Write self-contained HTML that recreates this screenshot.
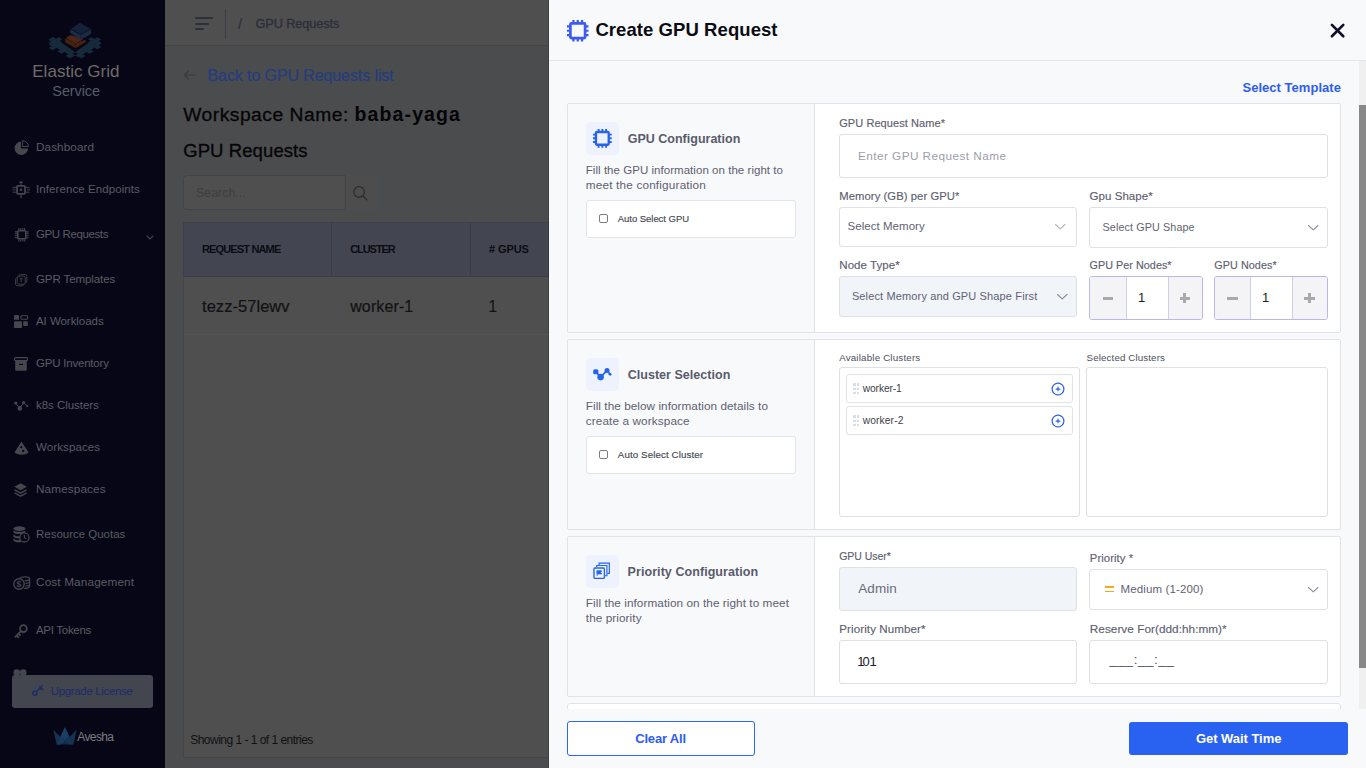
<!DOCTYPE html>
<html lang="en"><head><meta charset="utf-8"><title>Create GPU Request</title>
<style>
html,body{margin:0;padding:0}
body{width:1366px;height:768px;overflow:hidden;position:relative;background:#4e4e50;font-family:"Liberation Sans",sans-serif;}
.t{position:absolute;white-space:nowrap;display:block}
.b{position:absolute;box-sizing:border-box}
svg{position:absolute;overflow:visible}
#root{position:absolute;left:0;top:0;width:1366px;height:768px}
</style></head><body><div id="root">
<div class="b" style="left:165px;top:0px;width:384px;height:768px;background:#4b4c4e"></div>
<div class="b" style="left:165px;top:0px;width:384px;height:46px;background:#4f4f4f;border-bottom:1px solid #444548"></div>
<div class="b" style="left:195px;top:17.2px;width:18px;height:2.2px;background:#2d2f3c;border-radius:1.1px"></div>
<div class="b" style="left:195px;top:22.7px;width:14px;height:2.2px;background:#2d2f3c;border-radius:1.1px"></div>
<div class="b" style="left:195px;top:27.8px;width:9px;height:2.2px;background:#2d2f3c;border-radius:1.1px"></div>
<div class="b" style="left:225px;top:9px;width:1px;height:30px;background:#3b3c49"></div>
<span class="t" style="left:238.00px;top:15px;font-size:15px;line-height:17px;color:#2a2c39;letter-spacing:0.000px;">/</span>
<span class="t" style="left:255.50px;top:16px;font-size:12.75px;line-height:15px;color:#2b2d3a;letter-spacing:-0.103px;-webkit-text-stroke:0.3px #2b2d3a;">GPU Requests</span>
<svg style="left:183px;top:69px" width="13" height="12" viewBox="0 0 13 12"><path d="M12 6H1.5M5.5 2L1.5 6l4 4" fill="none" stroke="#3a3a3c" stroke-width="1.2" stroke-linecap="round" stroke-linejoin="round"/></svg>
<span class="t" style="left:207.50px;top:67px;font-size:16px;line-height:17px;color:#243c80;letter-spacing:-0.097px;-webkit-text-stroke:0.15px #243c80;">Back to GPU Requests list</span>
<span class="t" style="left:183.20px;top:104px;font-size:19.25px;line-height:21px;color:#050507;letter-spacing:0.505px;-webkit-text-stroke:0.3px #050507;">Workspace Name: </span>
<span class="t" style="left:354.60px;top:103px;font-size:19.5px;line-height:22px;color:#050507;font-weight:700;letter-spacing:1.105px;">baba-yaga</span>
<span class="t" style="left:183.20px;top:140px;font-size:18.5px;line-height:21px;color:#050507;letter-spacing:0.093px;-webkit-text-stroke:0.3px #050507;">GPU Requests</span>
<div class="b" style="left:183px;top:175px;width:163px;height:35px;background:#4f4f4f;border:1px solid #444446;border-radius:4px 0 0 4px"></div>
<div class="b" style="left:346px;top:175px;width:32px;height:35px;background:#4d4d4e;border-radius:0 4px 4px 0"></div>
<span class="t" style="left:195.90px;top:186px;font-size:12.5px;line-height:14px;color:#3e3e41;letter-spacing:-0.025px;">Search...</span>
<svg style="left:352px;top:185px" width="17" height="17" viewBox="0 0 17 17"><circle cx="7.1" cy="7" r="5.3" fill="none" stroke="#2c2c2f" stroke-width="1.2"/><path d="M11 11L14.9 14.8" stroke="#2c2c2f" stroke-width="1.2" stroke-linecap="round"/></svg>
<div class="b" style="left:183px;top:222px;width:366px;height:536px;background:#4f4f4f;border-left:1px solid #454548;border-bottom:1px solid #454548"></div>
<div class="b" style="left:183px;top:222px;width:366px;height:55px;background:#434650;border-bottom:1px solid #3a3c49;border-top:1px solid #3d3f4b;border-left:1px solid #3d3f4b"></div>
<div class="b" style="left:331px;top:222px;width:1px;height:55px;background:#3a3c49"></div>
<div class="b" style="left:470px;top:222px;width:1px;height:55px;background:#3a3c49"></div>
<span class="t" style="left:202.00px;top:243px;font-size:11px;line-height:12px;color:#0c0c14;font-weight:700;letter-spacing:-0.852px;">REQUEST NAME</span>
<span class="t" style="left:350.20px;top:243px;font-size:11px;line-height:12px;color:#0c0c14;font-weight:700;letter-spacing:-1.064px;">CLUSTER</span>
<span class="t" style="left:489.00px;top:243px;font-size:11px;line-height:12px;color:#0c0c14;font-weight:700;letter-spacing:-0.092px;"># GPUS</span>
<div class="b" style="left:184px;top:334px;width:365px;height:1px;background:#555558"></div>
<span class="t" style="left:202.00px;top:297px;font-size:16.5px;line-height:18px;color:#121214;letter-spacing:0.044px;-webkit-text-stroke:0.2px #121214;">tezz-57lewv</span>
<span class="t" style="left:350.20px;top:298px;font-size:16px;line-height:17px;color:#121214;letter-spacing:0.121px;-webkit-text-stroke:0.2px #121214;">worker-1</span>
<span class="t" style="left:488.30px;top:298px;font-size:16px;line-height:17px;color:#121214;letter-spacing:0.000px;">1</span>
<span class="t" style="left:190.20px;top:733px;font-size:12px;line-height:14px;color:#111113;letter-spacing:-0.518px;">Showing 1 - 1 of 1 entries</span>
<div class="b" style="left:0px;top:0px;width:165px;height:768px;background:#060616"></div>
<span class="t" style="left:32.20px;top:62px;font-size:17px;line-height:19px;color:#6f6c68;letter-spacing:0.041px;">Elastic Grid</span>
<span class="t" style="left:52.30px;top:83px;font-size:14.5px;line-height:16px;color:#555c68;letter-spacing:-0.093px;">Service</span>
<span class="t" style="left:36.00px;top:140px;font-size:11.75px;line-height:13px;color:#5b5c64;letter-spacing:0.068px;">Dashboard</span>
<span class="t" style="left:36.00px;top:183px;font-size:11.5px;line-height:12px;color:#5b5c64;letter-spacing:0.085px;">Inference Endpoints</span>
<span class="t" style="left:36.00px;top:228px;font-size:11.5px;line-height:12px;color:#5b5c64;letter-spacing:-0.392px;">GPU Requests</span>
<span class="t" style="left:36.00px;top:273px;font-size:11.5px;line-height:12px;color:#5b5c64;letter-spacing:-0.086px;">GPR Templates</span>
<span class="t" style="left:36.00px;top:315px;font-size:11.5px;line-height:12px;color:#5b5c64;letter-spacing:-0.048px;">AI Workloads</span>
<span class="t" style="left:36.00px;top:357px;font-size:11.5px;line-height:12px;color:#5b5c64;letter-spacing:-0.209px;">GPU Inventory</span>
<span class="t" style="left:36.00px;top:399px;font-size:11.5px;line-height:12px;color:#5b5c64;letter-spacing:-0.039px;">k8s Clusters</span>
<span class="t" style="left:36.00px;top:441px;font-size:11.5px;line-height:12px;color:#5b5c64;letter-spacing:0.104px;">Workspaces</span>
<span class="t" style="left:36.00px;top:482px;font-size:11.75px;line-height:13px;color:#5b5c64;letter-spacing:0.113px;">Namespaces</span>
<span class="t" style="left:36.00px;top:528px;font-size:11.5px;line-height:12px;color:#5b5c64;letter-spacing:-0.013px;">Resource Quotas</span>
<span class="t" style="left:36.00px;top:575px;font-size:11.75px;line-height:13px;color:#5b5c64;letter-spacing:0.146px;">Cost Management</span>
<span class="t" style="left:36.00px;top:624px;font-size:11.5px;line-height:12px;color:#5b5c64;letter-spacing:-0.296px;">API Tokens</span>
<svg style="left:146px;top:234.5px" width="8" height="5" viewBox="0 0 8 5"><path d="M.7.7L4 4 7.3.7" fill="none" stroke="#44464f" stroke-width="1.1"/></svg>
<svg style="left:48px;top:22px" width="56" height="38" viewBox="0 0 56 38"><path transform="translate(0,3.2)" d="M0.5 17.5L5 15l3 1.8 3-1.6 3.4 2-3 1.7L27.2 30.3 43 19l-3-1.8 3.4-2 3 1.7 3-1.7 4 2.4-3.6 2 3.6 2.2-4 2.3-3.2-1.9-3.6 2.1 3.2 1.9-4.2 2.4-3.2-1.9-3.8 2.2 3 1.8-4.2 2.4-6.2-2.6-5.4 2.6-4.2-2.4 3-1.8-3.8-2.2-3.2 1.9-4.2-2.4 3.2-1.9-3.6-2.1L4.8 25 .6 22.6l3.6-2.1z" fill="#172a3c"/><path d="M0.5 17.5L5 15l3 1.8 3-1.6 3.4 2-3 1.7L27.2 30.3 43 19l-3-1.8 3.4-2 3 1.7 3-1.7 4 2.4-3.6 2 3.6 2.2-4 2.3-3.2-1.9-3.6 2.1 3.2 1.9-4.2 2.4-3.2-1.9-3.8 2.2 3 1.8-4.2 2.4-6.2-2.6-5.4 2.6-4.2-2.4 3-1.8-3.8-2.2-3.2 1.9-4.2-2.4 3.2-1.9-3.6-2.1L4.8 25 .6 22.6l3.6-2.1z" fill="#172a3c"/><path d="M17.7 16.1l4.9-3.2 12.6 4.5L27.5 21.6z" fill="#4d2618"/><path d="M17.1 16.3l10.4 5.3v4.6L17.1 20.3z" fill="#45210f"/><path d="M27.5 21.6l10.1-4.2v2.9L27.5 26.2z" fill="#47220f"/><path d="M32 .8l10.5 5.9-9.8 5.8-9.8-5.8z" fill="#14213a"/><path d="M22.3 7.2l10.4 5.9v4.6L22.3 10.9z" fill="#1c2e43"/><path d="M32.7 13.1l10.4-6.2v5L32.7 17.7z" fill="#1a2a40"/></svg>
<svg style="left:13.5px;top:140px" width="15" height="15" viewBox="0 0 15 15"><path d="M7 1.6A6.7 6.7 0 1 0 14 8.4H7z" fill="#45464e"/><path d="M8.6.6a6 6 0 0 1 5.8 5.9H8.6z" fill="none" stroke="#45464e" stroke-width="1"/></svg>
<svg style="left:12px;top:181px" width="18" height="17.5" viewBox="0 0 18 17.5"><rect x="5" y="4.8" width="8" height="8" rx="1" fill="none" stroke="#45464e" stroke-width="1.8"/><circle cx="9" cy="8.8" r="1.3" fill="#45464e"/><path d="M9 1.2v3M9 13v2.4M.5 6.4h3.6M.5 8.8h3M.5 11.2h3.6M14 6.4h3.6M15 8.8h3M14 11.2h3.6" stroke="#45464e" stroke-width="1"/><path d="M7.3.5h3.4v1.4H7.3zM7.6 15.6h2.8L9 17.3z" fill="#45464e"/></svg>
<svg style="left:14.5px;top:228.2px" width="13.6" height="13.6" viewBox="0 0 13.6 13.6"><rect x="2.8" y="2.8" width="8" height="8" rx=".8" fill="none" stroke="#45464e" stroke-width="1.6"/><path d="M3.9 0v2.2M3.9 11.4v2.2M0 3.9h2.2M11.4 3.9h2.2M5.8 0v2.2M5.8 11.4v2.2M0 5.8h2.2M11.4 5.8h2.2M7.8 0v2.2M7.8 11.4v2.2M0 7.8h2.2M11.4 7.8h2.2M9.7 0v2.2M9.7 11.4v2.2M0 9.7h2.2M11.4 9.7h2.2" stroke="#45464e" stroke-width="1.1"/></svg>
<svg style="left:15px;top:273.5px" width="12.5" height="12.5" viewBox="0 0 12.5 12.5"><rect x="3.6" y=".6" width="8.2" height="8.2" rx="1.8" fill="none" stroke="#3d3e46" stroke-width="1"/><rect x=".6" y="3.6" width="8.2" height="8.2" rx="1.8" fill="none" stroke="#3d3e46" stroke-width="1"/><rect x="2.2" y="2.2" width="8" height="8" rx="1.6" fill="#060616" stroke="#3d3e46" stroke-width="1"/><path d="M4.5 4.7h3.4M6.2 4.7v3.4" stroke="#3d3e46" stroke-width="1"/></svg>
<svg style="left:14px;top:315px" width="14.2" height="13.2" viewBox="0 0 14.2 13.2"><rect x="0" y="0" width="5" height="4.8" rx=".7" fill="#45464e"/><rect x="7" y=".8" width="6.6" height="3.4" rx=".8" fill="none" stroke="#45464e" stroke-width="1.1"/><rect x="0" y="6.2" width="8" height="6.8" rx=".8" fill="#45464e"/><rect x="9.2" y="6.2" width="4.6" height="4.8" rx=".7" fill="#45464e"/></svg>
<svg style="left:14px;top:357.2px" width="14" height="14" viewBox="0 0 14 14"><rect x=".6" y=".6" width="12.8" height="3" rx=".7" fill="none" stroke="#45464e" stroke-width="1.1"/><path d="M1.2 4h11.6v8.8a1 1 0 0 1-1 1H2.2a1 1 0 0 1-1-1z" fill="#45464e"/><path d="M5 7.4h4" stroke="#060616" stroke-width="1.2"/></svg>
<svg style="left:14px;top:401px" width="14.5" height="10.5" viewBox="0 0 14.5 10.5"><path d="M1.8 2.2L5.8 7.4 9.6 1.6 13.3 5" fill="none" stroke="#45464e" stroke-width="1"/><rect x=".4" y=".8" width="2.7" height="2.7" rx=".5" fill="#45464e"/><circle cx="5.8" cy="7.4" r="2.3" fill="#45464e"/><circle cx="9.7" cy="1.7" r="1.6" fill="#45464e"/><circle cx="13.3" cy="5" r="1.1" fill="#45464e"/></svg>
<svg style="left:13.5px;top:440.5px" width="15" height="14.5" viewBox="0 0 15 14.5"><path d="M7.5.4L.4 11.6c4.2 3 10 3 14.2 0z" fill="#45464e"/><circle cx="7.3" cy="6.2" r="1.1" fill="#060616"/><circle cx="9.2" cy="9.9" r="1.2" fill="#060616"/></svg>
<svg style="left:14.3px;top:483px" width="13.2" height="13.6" viewBox="0 0 13.2 13.6"><path d="M6.6.3L12.9 3.8 6.6 7.3.3 3.8z" fill="#45464e"/><path d="M.6 6.9l6 3.3 6-3.3M.6 9.9l6 3.3 6-3.3" fill="none" stroke="#45464e" stroke-width="1.3"/></svg>
<svg style="left:12.8px;top:526.4px" width="17" height="17" viewBox="0 0 17 17"><ellipse cx="6.4" cy="2.6" rx="6" ry="2.4" fill="#45464e"/><path d="M.4 4.2c1.6 2.2 10.400 2.200 12 0v2.200c-1.600 2.200-10.400 2.200-12 0zM.4 8.200c1.600 2.200 6 2.400 7.400 1.700v2.400c-2 .5-5.800.2-7.400-1.700zM.4 12.200c1.600 1.900 5 2.300 7 1.900l1 2c-2.600.6-6.600-.1-8-1.700z" fill="#45464e"/><circle cx="11.400" cy="11.400" r="4.600" fill="#060616" stroke="#45464e" stroke-width="1.300"/><path d="M11.400 8.800v2.800l1.800 1" fill="none" stroke="#45464e" stroke-width="1.100"/></svg>
<svg style="left:12.8px;top:576px" width="17" height="14" viewBox="0 0 17 14"><path d="M7 2.200C8 .6 16.400.4 16.600 2.600v7.600c-.4 1.800-3.600 2.400-5.600 2.200" fill="none" stroke="#45464e" stroke-width="1.300"/><path d="M11.600 4.800c2 0 4.400-.4 5-1.400M12.400 7.400c1.800 0 3.600-.4 4.200-1.200M12.200 10c1.800 0 3.800-.4 4.400-1.300" fill="none" stroke="#45464e" stroke-width="1.100"/><circle cx="6" cy="8" r="5.200" fill="#060616" stroke="#45464e" stroke-width="1.400"/></svg>
<span class="t" style="left:16.40px;top:579px;font-size:8.5px;line-height:10px;color:#45464e;font-weight:700;letter-spacing:0.000px;">$</span>
<svg style="left:14.4px;top:623.6px" width="14" height="15" viewBox="0 0 14 15"><circle cx="9.400" cy="4.600" r="3.400" fill="none" stroke="#45464e" stroke-width="1.800"/><path d="M7 7.200L1.400 12.800M2.600 11.600l1.800 1.800M4.600 9.600l1.600 1.600" fill="none" stroke="#45464e" stroke-width="1.700" stroke-linecap="round"/></svg>
<svg style="left:12.8px;top:669.4px" width="14" height="12" viewBox="0 0 14 12"><circle cx="3.800" cy="3.600" r="3.300" fill="#45464e"/><circle cx="10.200" cy="3.600" r="3.300" fill="#45464e"/><path d="M0 12c0-3 1.600-4.600 3.800-4.600S7.600 9 7.600 12zM6.600 12c0-3 1.600-4.600 3.800-4.600S14 9 14 12z" fill="#45464e"/></svg>
<span class="t" style="left:36.00px;top:673px;font-size:11.5px;line-height:12px;color:#5b5c64;letter-spacing:-0.406px;">Users</span>
<div class="b" style="left:12px;top:675px;width:141px;height:33px;background:#43464f;border-radius:3px"></div>
<span class="t" style="left:50.80px;top:685px;font-size:11.5px;line-height:12px;color:#1d2b68;letter-spacing:-0.356px;">Upgrade License</span>
<span class="t" style="left:77.30px;top:730px;font-size:12px;line-height:14px;color:#7c7c80;letter-spacing:-0.618px;">Avesha</span>
<svg style="left:52.5px;top:726.5px" width="24" height="18" viewBox="0 0 24 18"><path d="M.3 2.8L8 10.5 3.600 17.500z" fill="#17324f"/><path d="M23.700 2.800L16 10.500l4.400 7z" fill="#17324f"/><path d="M11.900.2L3.600 17.500h16.800z" fill="#142c4a"/><path d="M11.900.2L7.600 9.300l4.300 4.200 4.300-4.200z" fill="#1a3f66"/><path d="M7.600 9.300L3.600 17.500h4.200l4.100-4z" fill="#183a5e"/><path d="M16.200 9.300l4.200 8.200h-4.200l-4.300-4z" fill="#153354"/></svg>
<svg style="left:32px;top:685.4px" width="12.5" height="11.200" viewBox="0 0 12.5 11.200"><circle cx="2.900" cy="8.200" r="2.100" fill="none" stroke="#1d2b68" stroke-width="1.400"/><path d="M4.400 6.700L9.600 1.600M7.600 1.400l3.400 3.200M9.900.8L8.400 4.600" fill="none" stroke="#1d2b68" stroke-width="1.400" stroke-linecap="round"/></svg>
<div class="b" style="left:548px;top:0px;width:1px;height:768px;background:rgba(0,0,0,.18)"></div>
<div class="b" style="left:549px;top:0px;width:817px;height:768px;background:#f8f9fb"></div>
<div class="b" style="left:549px;top:60px;width:817px;height:1px;background:#e4e5e9"></div>
<svg style="left:566.7px;top:19.7px" width="21.5" height="21.5" viewBox="0 0 24 24"><rect x="3.8" y="3.8" width="16.4" height="16.4" rx="1.2" fill="none" stroke="#3d5af1" stroke-width="3"/><path d="M7.2 0v2.8M7.2 21.2v2.8M0 7.2h2.8M21.2 7.2h2.8M12 0v2.8M12 21.2v2.8M0 12h2.8M21.2 12h2.8M16.8 0v2.8M16.8 21.2v2.8M0 16.8h2.8M21.2 16.8h2.8" stroke="#3d5af1" stroke-width="2.5"/></svg>
<span class="t" style="left:595.40px;top:19px;font-size:18.5px;line-height:21px;color:#0b0b12;font-weight:700;letter-spacing:0.070px;">Create GPU Request</span>
<svg style="left:1329.8px;top:22.6px" width="15.2" height="15.2" viewBox="0 0 15.2 15.2"><path d="M1.900 1.900l11.400 11.400M13.300 1.900L1.900 13.300" stroke="#0d0f2b" stroke-width="2.600" stroke-linecap="round"/></svg>
<span class="t" style="left:1242.50px;top:80px;font-size:13px;line-height:15px;color:#2d5df0;font-weight:700;letter-spacing:0.025px;">Select Template</span>
<div class="b" style="left:1359px;top:61px;width:7px;height:648px;background:#f0f0f1"></div>
<div class="b" style="left:1359px;top:105px;width:7px;height:563px;background:#888889"></div>
<div class="b" style="left:567px;top:103px;width:774px;height:230px;background:#fff;border:1px solid #e2e3e7;border-radius:2px"></div>
<div class="b" style="left:568px;top:104px;width:246px;height:228px;background:#f8f9fb"></div>
<div class="b" style="left:814px;top:104px;width:1px;height:228px;background:#e2e3e7"></div>
<div class="b" style="left:586px;top:122px;width:33px;height:33px;background:#edf2fe;border-radius:5px"></div>
<svg style="left:592.7px;top:129.3px" width="18.7" height="18.7" viewBox="0 0 24 24"><rect x="3.8" y="3.8" width="16.4" height="16.4" rx="1.2" fill="none" stroke="#2563eb" stroke-width="3"/><path d="M7.2 0v2.8M7.2 21.2v2.8M0 7.2h2.8M21.2 7.2h2.8M12 0v2.8M12 21.2v2.8M0 12h2.8M21.2 12h2.8M16.8 0v2.8M16.8 21.2v2.8M0 16.8h2.8M21.2 16.8h2.8" stroke="#2563eb" stroke-width="2.5"/></svg>
<span class="t" style="left:627.70px;top:132px;font-size:12.5px;line-height:14px;color:#595b6b;font-weight:700;letter-spacing:0.006px;">GPU Configuration</span>
<span class="t" style="left:585.80px;top:164px;font-size:11.5px;line-height:12px;color:#5d6070;letter-spacing:0.040px;">Fill the GPU information on the right to</span>
<span class="t" style="left:585.80px;top:178px;font-size:11.75px;line-height:13px;color:#5d6070;letter-spacing:0.179px;">meet the configuration</span>
<div class="b" style="left:586px;top:200px;width:210px;height:38px;background:#fff;border:1px solid #e3e4e8;border-radius:3px"></div>
<div class="b" style="left:599px;top:214px;width:9px;height:9px;background:#fff;border:1px solid #7d7d80;border-radius:2px"></div>
<span class="t" style="left:617.80px;top:213px;font-size:9.5px;line-height:11px;color:#474852;letter-spacing:-0.041px;-webkit-text-stroke:0.15px #474852;">Auto Select GPU</span>
<span class="t" style="left:839.20px;top:117px;font-size:11px;line-height:12px;color:#5d6070;letter-spacing:0.074px;-webkit-text-stroke:0.15px #5d6070;">GPU Request Name*</span>
<div class="b" style="left:839px;top:134px;width:489px;height:44px;background:#fff;border:1px solid #dfe0e4;border-radius:3px"></div>
<span class="t" style="left:858.00px;top:149px;font-size:11.75px;line-height:13px;color:#9d9eab;letter-spacing:0.452px;">Enter GPU Request Name</span>
<span class="t" style="left:839.30px;top:190px;font-size:11.25px;line-height:12px;color:#5d6070;letter-spacing:0.072px;-webkit-text-stroke:0.15px #5d6070;">Memory (GB) per GPU*</span>
<div class="b" style="left:839px;top:207px;width:238px;height:40px;background:#fff;border:1px solid #dfe0e4;border-radius:3px"></div>
<span class="t" style="left:847.50px;top:220px;font-size:11.5px;line-height:12px;color:#5f6272;letter-spacing:0.047px;">Select Memory</span>
<svg style="left:1054.55px;top:223.9px" width="10.5" height="5.4" viewBox="0 0 10.5 5.4"><path d="M.5 .5L5.25 4.9L10 .5" fill="none" stroke="#b4b4be" stroke-width="1.1" stroke-linecap="round" stroke-linejoin="round"/></svg>
<span class="t" style="left:1089.60px;top:190px;font-size:11.5px;line-height:12px;color:#5d6070;letter-spacing:0.044px;-webkit-text-stroke:0.15px #5d6070;">Gpu Shape*</span>
<div class="b" style="left:1089px;top:207px;width:239px;height:41px;background:#fff;border:1px solid #dfe0e4;border-radius:3px"></div>
<span class="t" style="left:1102.50px;top:221px;font-size:10.75px;line-height:12px;color:#5f6272;letter-spacing:0.123px;">Select GPU Shape</span>
<svg style="left:1308.05px;top:224.8px" width="10.5" height="5.4" viewBox="0 0 10.5 5.4"><path d="M.5 .5L5.25 4.9L10 .5" fill="none" stroke="#8f8f9b" stroke-width="1.1" stroke-linecap="round" stroke-linejoin="round"/></svg>
<span class="t" style="left:839.30px;top:259px;font-size:11.5px;line-height:12px;color:#5d6070;letter-spacing:0.052px;-webkit-text-stroke:0.15px #5d6070;">Node Type*</span>
<div class="b" style="left:839px;top:276px;width:238px;height:41px;background:#f1f4f9;border:1px solid #dfe0e4;border-radius:3px"></div>
<span class="t" style="left:851.90px;top:290px;font-size:11px;line-height:12px;color:#5f6272;letter-spacing:0.137px;">Select Memory and GPU Shape First</span>
<svg style="left:1057.15px;top:294.1px" width="10.5" height="5.4" viewBox="0 0 10.5 5.4"><path d="M.5 .5L5.25 4.9L10 .5" fill="none" stroke="#8d8d99" stroke-width="1.1" stroke-linecap="round" stroke-linejoin="round"/></svg>
<span class="t" style="left:1089.60px;top:259px;font-size:10.75px;line-height:12px;color:#5d6070;letter-spacing:0.053px;-webkit-text-stroke:0.15px #5d6070;">GPU Per Nodes*</span>
<div class="b" style="left:1089px;top:276px;width:114px;height:44px;background:#fff;border:1px solid #b9b8e6;border-radius:3px"></div>
<div class="b" style="left:1090px;top:277px;width:36.5px;height:42px;background:#f4f4f6;border-right:1px solid #cfcfe6;border-radius:2px 0 0 2px"></div>
<div class="b" style="left:1167.5px;top:277px;width:34.5px;height:42px;background:#f4f4f6;border-left:1px solid #cfcfe6;border-radius:0 2px 2px 0"></div>
<div class="b" style="left:1102.75px;top:296.6px;width:10.6px;height:3px;background:#a9a9ad"></div>
<div class="b" style="left:1179.65px;top:296.6px;width:10.6px;height:3px;background:#a9a9ad"></div>
<div class="b" style="left:1183.45px;top:292.8px;width:3px;height:10.6px;background:#a9a9ad"></div>
<span class="t" style="left:1138.00px;top:290px;font-size:13px;line-height:15px;color:#1d1d26;letter-spacing:0.000px;">1</span>
<span class="t" style="left:1214.30px;top:259px;font-size:10.75px;line-height:12px;color:#5d6070;letter-spacing:0.086px;-webkit-text-stroke:0.15px #5d6070;">GPU Nodes*</span>
<div class="b" style="left:1214px;top:276px;width:114px;height:44px;background:#fff;border:1px solid #b9b8e6;border-radius:3px"></div>
<div class="b" style="left:1215px;top:277px;width:35.5px;height:42px;background:#f4f4f6;border-right:1px solid #cfcfe6;border-radius:2px 0 0 2px"></div>
<div class="b" style="left:1291.5px;top:277px;width:35.5px;height:42px;background:#f4f4f6;border-left:1px solid #cfcfe6;border-radius:0 2px 2px 0"></div>
<div class="b" style="left:1227.25px;top:296.6px;width:10.6px;height:3px;background:#a9a9ad"></div>
<div class="b" style="left:1304.15px;top:296.6px;width:10.6px;height:3px;background:#a9a9ad"></div>
<div class="b" style="left:1307.95px;top:292.8px;width:3px;height:10.6px;background:#a9a9ad"></div>
<span class="t" style="left:1262.00px;top:290px;font-size:13px;line-height:15px;color:#1d1d26;letter-spacing:0.000px;">1</span>
<div class="b" style="left:567px;top:339px;width:774px;height:191px;background:#fff;border:1px solid #e2e3e7;border-radius:2px"></div>
<div class="b" style="left:568px;top:340px;width:246px;height:189px;background:#f8f9fb"></div>
<div class="b" style="left:814px;top:340px;width:1px;height:189px;background:#e2e3e7"></div>
<div class="b" style="left:586px;top:358px;width:33px;height:33px;background:#edf2fe;border-radius:5px"></div>
<svg style="left:593px;top:367.3px" width="19" height="14" viewBox="0 0 19 14"><path d="M2.8 4.800L7.600 10.100 14 3.600 17.100 7.300" fill="none" stroke="#2563eb" stroke-width="1.700"/><rect x=".2" y="2.200" width="5.200" height="5.100" rx="1.600" fill="#2563eb"/><circle cx="7.600" cy="10.100" r="3.300" fill="#2563eb"/><circle cx="14" cy="3.600" r="2.500" fill="#2563eb"/><circle cx="17.100" cy="7.300" r="1.400" fill="#2563eb"/></svg>
<span class="t" style="left:627.70px;top:368px;font-size:12.5px;line-height:14px;color:#595b6b;font-weight:700;letter-spacing:0.029px;">Cluster Selection</span>
<span class="t" style="left:585.80px;top:399px;font-size:11.75px;line-height:13px;color:#5d6070;letter-spacing:0.052px;">Fill the below information details to</span>
<span class="t" style="left:585.80px;top:414px;font-size:11.75px;line-height:13px;color:#5d6070;letter-spacing:0.112px;">create a workspace</span>
<div class="b" style="left:586px;top:436px;width:210px;height:38px;background:#fff;border:1px solid #e3e4e8;border-radius:3px"></div>
<div class="b" style="left:599px;top:450px;width:9px;height:9px;background:#fff;border:1px solid #7d7d80;border-radius:2px"></div>
<span class="t" style="left:617.80px;top:449px;font-size:9.75px;line-height:11px;color:#474852;letter-spacing:0.102px;-webkit-text-stroke:0.15px #474852;">Auto Select Cluster</span>
<span class="t" style="left:839.20px;top:352px;font-size:9.75px;line-height:11px;color:#4d4f5c;letter-spacing:0.186px;">Available Clusters</span>
<div class="b" style="left:839px;top:367px;width:241px;height:150px;background:#fff;border:1px solid #dfe0e4;border-radius:3px"></div>
<span class="t" style="left:1086.60px;top:352px;font-size:9.75px;line-height:11px;color:#4d4f5c;letter-spacing:0.117px;">Selected Clusters</span>
<div class="b" style="left:1086px;top:367px;width:242px;height:150px;background:#fff;border:1px solid #dfe0e4;border-radius:3px"></div>
<div class="b" style="left:846px;top:374px;width:227px;height:29px;background:#fff;border:1px solid #e1e2e6;border-radius:3px"></div>
<div class="b" style="left:853px;top:383.3px;width:2.6px;height:2.6px;background:#dadbe3;border-radius:.6px"></div>
<div class="b" style="left:856.6px;top:383.3px;width:2.6px;height:2.6px;background:#dadbe3;border-radius:.6px"></div>
<div class="b" style="left:853px;top:387.5px;width:2.6px;height:2.6px;background:#dadbe3;border-radius:.6px"></div>
<div class="b" style="left:856.6px;top:387.5px;width:2.6px;height:2.6px;background:#dadbe3;border-radius:.6px"></div>
<div class="b" style="left:853px;top:391.7px;width:2.6px;height:2.6px;background:#dadbe3;border-radius:.6px"></div>
<div class="b" style="left:856.6px;top:391.7px;width:2.6px;height:2.6px;background:#dadbe3;border-radius:.6px"></div>
<span class="t" style="left:862.70px;top:383px;font-size:10.25px;line-height:11px;color:#3c3e4a;letter-spacing:-0.108px;">worker-1</span>
<svg style="left:1051.4px;top:381.6px" width="14" height="14" viewBox="0 0 14 14"><circle cx="7" cy="7" r="5.9" fill="none" stroke="#2f62f0" stroke-width="1.25"/><path d="M4.7 7h4.6M7 4.7v4.6" stroke="#2f62f0" stroke-width="1.25"/></svg>
<div class="b" style="left:846px;top:406px;width:227px;height:29px;background:#fff;border:1px solid #e1e2e6;border-radius:3px"></div>
<div class="b" style="left:853px;top:415.3px;width:2.6px;height:2.6px;background:#dadbe3;border-radius:.6px"></div>
<div class="b" style="left:856.6px;top:415.3px;width:2.6px;height:2.6px;background:#dadbe3;border-radius:.6px"></div>
<div class="b" style="left:853px;top:419.5px;width:2.6px;height:2.6px;background:#dadbe3;border-radius:.6px"></div>
<div class="b" style="left:856.6px;top:419.5px;width:2.6px;height:2.6px;background:#dadbe3;border-radius:.6px"></div>
<div class="b" style="left:853px;top:423.7px;width:2.6px;height:2.6px;background:#dadbe3;border-radius:.6px"></div>
<div class="b" style="left:856.6px;top:423.7px;width:2.6px;height:2.6px;background:#dadbe3;border-radius:.6px"></div>
<span class="t" style="left:862.70px;top:415px;font-size:10.25px;line-height:11px;color:#3c3e4a;letter-spacing:0.117px;">worker-2</span>
<svg style="left:1051.4px;top:413.6px" width="14" height="14" viewBox="0 0 14 14"><circle cx="7" cy="7" r="5.9" fill="none" stroke="#2f62f0" stroke-width="1.25"/><path d="M4.7 7h4.6M7 4.7v4.6" stroke="#2f62f0" stroke-width="1.25"/></svg>
<div class="b" style="left:567px;top:536px;width:774px;height:161px;background:#fff;border:1px solid #e2e3e7;border-radius:2px"></div>
<div class="b" style="left:568px;top:537px;width:246px;height:159px;background:#f8f9fb"></div>
<div class="b" style="left:814px;top:537px;width:1px;height:159px;background:#e2e3e7"></div>
<div class="b" style="left:586px;top:555px;width:33px;height:33px;background:#edf2fe;border-radius:5px"></div>
<svg style="left:593.2px;top:562.4px" width="17.4" height="17.4" viewBox="0 0 18 18"><path d="M6.3 3V1.1h10.6v10.6H15" fill="none" stroke="#2563eb" stroke-width="1.2"/><path d="M3.8 5.5V3.6h10.6v10.6h-1.9" fill="none" stroke="#2563eb" stroke-width="1.2"/><rect x="1" y="6.2" width="10.8" height="10.8" rx="1" fill="none" stroke="#2563eb" stroke-width="1.4"/><path d="M4.3 8.8v5.6M4.3 9.1h4.6l-1 1.6 1 1.6H4.3z" fill="#2563eb" stroke="#2563eb" stroke-width=".9" stroke-linejoin="round"/></svg>
<span class="t" style="left:627.60px;top:565px;font-size:12.5px;line-height:14px;color:#595b6b;font-weight:700;letter-spacing:0.065px;">Priority Configuration</span>
<span class="t" style="left:585.80px;top:596px;font-size:11.75px;line-height:13px;color:#5d6070;letter-spacing:0.066px;">Fill the information on the right to meet</span>
<span class="t" style="left:585.80px;top:611px;font-size:11.75px;line-height:13px;color:#5d6070;letter-spacing:0.079px;">the priority</span>
<span class="t" style="left:839.20px;top:550px;font-size:10.5px;line-height:12px;color:#5d6070;letter-spacing:-0.036px;-webkit-text-stroke:0.15px #5d6070;">GPU User*</span>
<div class="b" style="left:839px;top:567px;width:238px;height:44px;background:#f1f4f9;border:1px solid #dfe0e4;border-radius:3px"></div>
<span class="t" style="left:858.30px;top:581px;font-size:13.5px;line-height:15px;color:#6a6d79;letter-spacing:0.047px;">Admin</span>
<span class="t" style="left:1089.80px;top:552px;font-size:11.25px;line-height:12px;color:#5d6070;letter-spacing:0.089px;-webkit-text-stroke:0.15px #5d6070;">Priority *</span>
<div class="b" style="left:1089px;top:569px;width:239px;height:41px;background:#fff;border:1px solid #dfe0e4;border-radius:3px"></div>
<div class="b" style="left:1105px;top:585.8px;width:9px;height:1.9px;background:#f7a91f"></div>
<div class="b" style="left:1105px;top:590.5px;width:9px;height:1.9px;background:#f7a91f"></div>
<span class="t" style="left:1120.60px;top:583px;font-size:11.5px;line-height:12px;color:#5f6272;letter-spacing:0.117px;">Medium (1-200)</span>
<svg style="left:1308.05px;top:586.9px" width="10.5" height="5.4" viewBox="0 0 10.5 5.4"><path d="M.5 .5L5.25 4.9L10 .5" fill="none" stroke="#8f8f9b" stroke-width="1.1" stroke-linecap="round" stroke-linejoin="round"/></svg>
<span class="t" style="left:839.20px;top:623px;font-size:11.5px;line-height:12px;color:#5d6070;letter-spacing:0.134px;-webkit-text-stroke:0.15px #5d6070;">Priority Number*</span>
<div class="b" style="left:839px;top:640px;width:238px;height:44px;background:#fff;border:1px solid #dfe0e4;border-radius:3px"></div>
<span class="t" style="left:857.20px;top:654px;font-size:13px;line-height:15px;color:#1a1a28;letter-spacing:0.000px;">1</span>
<span class="t" style="left:862.40px;top:654px;font-size:13px;line-height:15px;color:#1a1a28;letter-spacing:0.000px;">0</span>
<span class="t" style="left:869.50px;top:654px;font-size:13px;line-height:15px;color:#1a1a28;letter-spacing:0.000px;">1</span>
<span class="t" style="left:1089.80px;top:622px;font-size:11.75px;line-height:13px;color:#5d6070;letter-spacing:0.047px;-webkit-text-stroke:0.15px #5d6070;">Reserve For(ddd:hh:mm)*</span>
<div class="b" style="left:1089px;top:640px;width:239px;height:44px;background:#fff;border:1px solid #dfe0e4;border-radius:3px"></div>
<span class="t" style="left:1109.60px;top:652px;font-size:13.5px;line-height:15px;color:#4a4c56;letter-spacing:0.505px;">___:__:__</span>
<div class="b" style="left:567px;top:703px;width:774px;height:17px;background:#fff;border:1px solid #e2e3e7;border-radius:3px"></div>
<div class="b" style="left:549px;top:709px;width:817px;height:59px;background:#f8f9fb"></div>
<div class="b" style="left:567px;top:721px;width:188px;height:35px;background:#fff;border:1px solid #2b66f6;border-radius:3px"></div>
<span class="t" style="left:635.20px;top:731px;font-size:13px;line-height:15px;color:#2d5df0;font-weight:700;letter-spacing:-0.163px;">Clear All</span>
<div class="b" style="left:1129px;top:722px;width:219px;height:33px;background:#2962f0;border-radius:3px"></div>
<span class="t" style="left:1196.00px;top:731px;font-size:13px;line-height:15px;color:#fff;font-weight:700;letter-spacing:-0.044px;">Get Wait Time</span>
</div></body></html>
